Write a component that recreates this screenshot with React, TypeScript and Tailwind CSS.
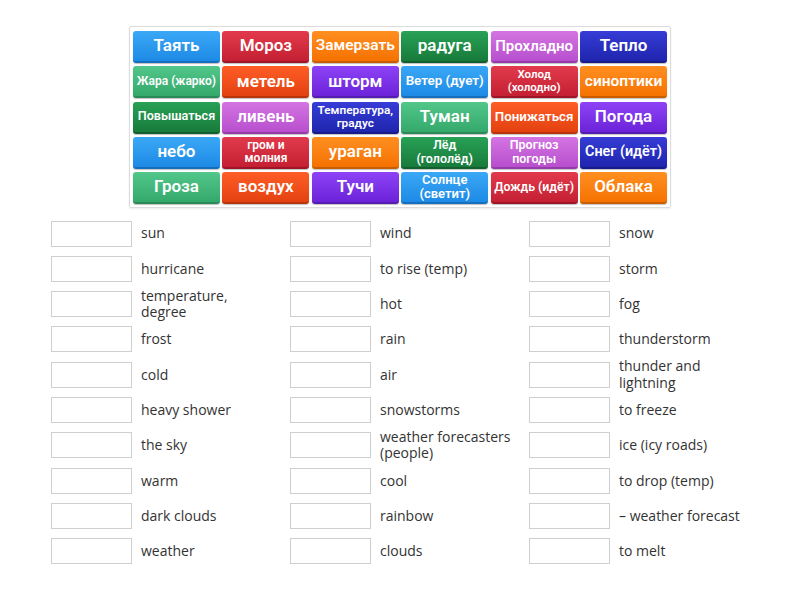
import React from "react";

type C = "blue" | "red" | "orange" | "dgreen" | "orchid" | "navy" | "mgreen" | "ored" | "violet";

const colorCls: Record<C, string> = {
  blue: "bg-linear-to-b from-[#3aa8f6] to-[#1d8ae6] border-b-[#166fbd]",
  red: "bg-linear-to-b from-[#e23a4d] to-[#c41f32] border-b-[#9e1526]",
  orange: "bg-linear-to-b from-[#ff8f1f] to-[#f57200] border-b-[#c95d00]",
  dgreen: "bg-linear-to-b from-[#28a156] to-[#187b3b] border-b-[#11602d]",
  orchid: "bg-linear-to-b from-[#d474e2] to-[#b84fce] border-b-[#9639a9]",
  navy: "bg-linear-to-b from-[#363cd6] to-[#1f25ad] border-b-[#181c8a]",
  mgreen: "bg-linear-to-b from-[#52c78a] to-[#35a86c] border-b-[#2a8a57]",
  ored: "bg-linear-to-b from-[#ff5d26] to-[#e34210] border-b-[#b9340b]",
  violet: "bg-linear-to-b from-[#8e42f6] to-[#6c22d9] border-b-[#561bb0]",
};

type Tile = { t: React.ReactNode; c: C; s: string };

const tiles: Tile[] = [
  { t: "Таять", c: "blue", s: "text-[17px]" },
  { t: "Мороз", c: "red", s: "text-[17px]" },
  { t: "Замерзать", c: "orange", s: "text-[15.5px]" },
  { t: "радуга", c: "dgreen", s: "text-[17px]" },
  { t: "Прохладно", c: "orchid", s: "text-[15px]" },
  { t: "Тепло", c: "navy", s: "text-[17px]" },

  { t: "Жара (жарко)", c: "mgreen", s: "text-[12px]" },
  { t: "метель", c: "ored", s: "text-[17px]" },
  { t: "шторм", c: "violet", s: "text-[17px]" },
  { t: "Ветер (дует)", c: "blue", s: "text-[13.4px]" },
  { t: <>Холод<br />(холодно)</>, c: "red", s: "text-[11.5px] leading-[13px]" },
  { t: "синоптики", c: "orange", s: "text-[15.5px]" },

  { t: "Повышаться", c: "dgreen", s: "text-[12.6px]" },
  { t: "ливень", c: "orchid", s: "text-[17px]" },
  { t: <>Температура,<br />градус</>, c: "navy", s: "text-[11.8px] leading-[13px]" },
  { t: "Туман", c: "mgreen", s: "text-[17px]" },
  { t: "Понижаться", c: "ored", s: "text-[13.3px]" },
  { t: "Погода", c: "violet", s: "text-[17px]" },

  { t: "небо", c: "blue", s: "text-[17px]" },
  { t: <>гром и<br />молния</>, c: "red", s: "text-[12px] leading-[13px]" },
  { t: "ураган", c: "orange", s: "text-[17px]" },
  { t: <>Лёд<br />(гололёд)</>, c: "dgreen", s: "text-[12.5px] leading-[13.5px]" },
  { t: <>Прогноз<br />погоды</>, c: "orchid", s: "text-[12.5px] leading-[13.5px]" },
  { t: "Снег (идёт)", c: "navy", s: "text-[14.4px]" },

  { t: "Гроза", c: "mgreen", s: "text-[17px]" },
  { t: "воздух", c: "ored", s: "text-[17px]" },
  { t: "Тучи", c: "violet", s: "text-[17px]" },
  { t: <>Солнце<br />(светит)</>, c: "blue", s: "text-[13px] leading-[14px]" },
  { t: "Дождь (идёт)", c: "red", s: "text-[12.3px]" },
  { t: "Облака", c: "orange", s: "text-[17px]" },
];

const col1: React.ReactNode[] = [
  "sun",
  "hurricane",
  <>temperature,<br />degree</>,
  "frost",
  "cold",
  "heavy shower",
  "the sky",
  "warm",
  "dark clouds",
  "weather",
];
const col2: React.ReactNode[] = [
  "wind",
  "to rise (temp)",
  "hot",
  "rain",
  "air",
  "snowstorms",
  <>weather forecasters<br />(people)</>,
  "cool",
  "rainbow",
  "clouds",
];
const col3: React.ReactNode[] = [
  "snow",
  "storm",
  "fog",
  "thunderstorm",
  <>thunder and<br />lightning</>,
  "to freeze",
  "ice (icy roads)",
  "to drop (temp)",
  "– weather forecast",
  "to melt",
];

function Column({ items }: { items: React.ReactNode[] }) {
  return (
    <div className="flex flex-col gap-[9.33px] w-[239px]">
      {items.map((it, i) => (
        <div key={i} className="flex items-center h-[26px]">
          <div className="w-[81px] h-[26px] border border-[#cfcfcf] bg-white shrink-0" />
          <div className="ml-[9px] text-[14px] leading-[16.5px] text-[#333333] whitespace-nowrap">{it}</div>
        </div>
      ))}
    </div>
  );
}

export default function App() {
  return (
    <div className="w-[800px] h-[600px] bg-white overflow-hidden" style={{ fontFamily: '"Open Sans", sans-serif' }}>
      <div className="flex justify-center pt-[26px]">
        <div className="w-[542px] h-[182px] border border-[#dcdcdc] rounded-[2px] pt-[4px] pl-[3px] pr-[3px] shadow-[0_1px_2px_rgba(0,0,0,0.08)]">
          <div className="grid grid-cols-6 gap-x-[2.5px] gap-y-[3.25px]" style={{ fontFamily: "Roboto, sans-serif" }}>
            {tiles.map((tl, i) => (
              <div
                key={i}
                className={`h-[32px] rounded-[3px] border-b-2 flex items-center justify-center text-center text-white font-semibold shadow-[0_1px_1px_rgba(0,0,0,0.25)] whitespace-nowrap ${colorCls[tl.c]} ${tl.s}`}
              >
                <span>{tl.t}</span>
              </div>
            ))}
          </div>
        </div>
      </div>
      <div className="flex pl-[51px] pt-[12.5px]">
        <Column items={col1} />
        <Column items={col2} />
        <Column items={col3} />
      </div>
    </div>
  );
}
